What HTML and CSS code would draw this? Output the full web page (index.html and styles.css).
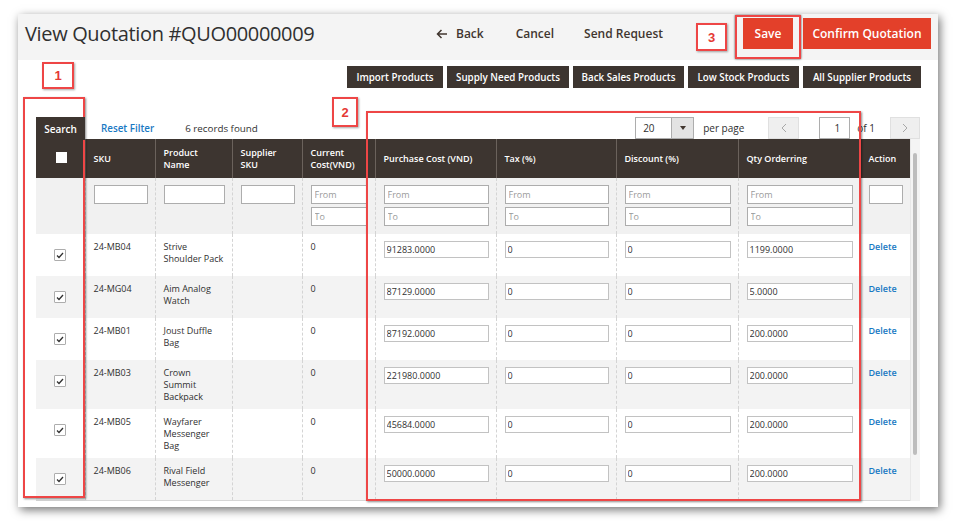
FILE: index.html
```html
<!DOCTYPE html>
<html lang="en">
<head>
<meta charset="utf-8">
<title>View Quotation #QUO00000009</title>
<link rel="stylesheet" href="styles.css">
</head>
<body>
<div class="stage">
  <div class="card">
    <header class="page-head">
      <h1 class="page-title">View Quotation #QUO00000009</h1>
      <nav class="actions">
        <a class="act act-back"><svg class="back-ico" width="12" height="10" viewBox="0 0 12 10"><path d="M11 5H1.5M5.5 1L1.5 5l4 4" fill="none" stroke="#41362f" stroke-width="1.5"/></svg>Back</a>
        <a class="act act-cancel">Cancel</a>
        <a class="act act-send">Send Request</a>
        <button class="btn-primary btn-save">Save</button>
        <button class="btn-primary btn-confirm">Confirm Quotation</button>
      </nav>
    </header>

    <div class="toolbar">
      <button class="tb-btn w95">Import Products</button>
      <button class="tb-btn w122">Supply Need Products</button>
      <button class="tb-btn w112">Back Sales Products</button>
      <button class="tb-btn w111">Low Stock Products</button>
      <button class="tb-btn w118">All Supplier Products</button>
    </div>

    <section class="grid">
      <div class="grid-top">
        <div class="search-tab">Search</div>
        <a class="reset-link">Reset Filter</a>
        <span class="count">6 records found</span>
        <div class="pager">
          <div class="select"><span class="select-val">20</span><span class="select-arrow"><svg width="6" height="4" viewBox="0 0 6 4"><path d="M0 0h6L3 4z" fill="#41362f"/></svg></span></div>
          <span class="per-page">per page</span>
          <span class="pg-btn pg-prev"><svg width="6" height="10" viewBox="0 0 6 10"><path d="M5 1L1 5l4 4" fill="none" stroke="#a8a8a8" stroke-width="1"/></svg></span>
          <span class="pg-input">1</span>
          <span class="of">of 1</span>
          <span class="pg-btn pg-next"><svg width="6" height="10" viewBox="0 0 6 10"><path d="M1 1l4 4-4 4" fill="none" stroke="#a8a8a8" stroke-width="1"/></svg></span>
        </div>
      </div>

      <div class="grid-body">
        <table class="data">
          <colgroup>
            <col class="c-check"><col class="c-sku"><col class="c-name"><col class="c-ssku"><col class="c-cost">
            <col class="c-pc"><col class="c-tax"><col class="c-disc"><col class="c-qty"><col class="c-act">
          </colgroup>
          <thead>
            <tr class="head">
              <th class="th-check"><span class="head-box"></span></th>
              <th>SKU</th>
              <th>Product Name</th>
              <th>Supplier SKU</th>
              <th>Current Cost(VND)</th>
              <th>Purchase Cost (VND)</th>
              <th>Tax (%)</th>
              <th>Discount (%)</th>
              <th>Qty Orderring</th>
              <th>Action</th>
            </tr>
            <tr class="filters">
              <td class="td-check"></td>
              <td><input class="f-in" type="text"></td>
              <td><input class="f-in" type="text"></td>
              <td><input class="f-in" type="text"></td>
              <td><input class="f-in" type="text" placeholder="From"><input class="f-in f-to" type="text" placeholder="To"></td>
              <td><input class="f-in" type="text" placeholder="From"><input class="f-in f-to" type="text" placeholder="To"></td>
              <td><input class="f-in" type="text" placeholder="From"><input class="f-in f-to" type="text" placeholder="To"></td>
              <td><input class="f-in" type="text" placeholder="From"><input class="f-in f-to" type="text" placeholder="To"></td>
              <td><input class="f-in" type="text" placeholder="From"><input class="f-in f-to" type="text" placeholder="To"></td>
              <td><input class="f-in" type="text"></td>
            </tr>
          </thead>
          <tbody>
            <tr class="row">
              <td class="td-check"><span class="cb"><svg width="8" height="7" viewBox="0 0 8 7"><path d="M1 3.5l2 2L7 1" fill="none" stroke="#303030" stroke-width="1.3"/></svg></span></td>
              <td>24-MB04</td><td>Strive<br>Shoulder Pack</td><td></td><td>0</td>
              <td><input class="r-in" type="text" value="91283.0000"></td>
              <td><input class="r-in" type="text" value="0"></td>
              <td><input class="r-in" type="text" value="0"></td>
              <td><input class="r-in" type="text" value="1199.0000"></td>
              <td><a class="del">Delete</a></td>
            </tr>
            <tr class="row alt">
              <td class="td-check"><span class="cb"><svg width="8" height="7" viewBox="0 0 8 7"><path d="M1 3.5l2 2L7 1" fill="none" stroke="#303030" stroke-width="1.3"/></svg></span></td>
              <td>24-MG04</td><td>Aim Analog<br>Watch</td><td></td><td>0</td>
              <td><input class="r-in" type="text" value="87129.0000"></td>
              <td><input class="r-in" type="text" value="0"></td>
              <td><input class="r-in" type="text" value="0"></td>
              <td><input class="r-in" type="text" value="5.0000"></td>
              <td><a class="del">Delete</a></td>
            </tr>
            <tr class="row">
              <td class="td-check"><span class="cb"><svg width="8" height="7" viewBox="0 0 8 7"><path d="M1 3.5l2 2L7 1" fill="none" stroke="#303030" stroke-width="1.3"/></svg></span></td>
              <td>24-MB01</td><td>Joust Duffle<br>Bag</td><td></td><td>0</td>
              <td><input class="r-in" type="text" value="87192.0000"></td>
              <td><input class="r-in" type="text" value="0"></td>
              <td><input class="r-in" type="text" value="0"></td>
              <td><input class="r-in" type="text" value="200.0000"></td>
              <td><a class="del">Delete</a></td>
            </tr>
            <tr class="row alt">
              <td class="td-check"><span class="cb"><svg width="8" height="7" viewBox="0 0 8 7"><path d="M1 3.5l2 2L7 1" fill="none" stroke="#303030" stroke-width="1.3"/></svg></span></td>
              <td>24-MB03</td><td>Crown<br>Summit<br>Backpack</td><td></td><td>0</td>
              <td><input class="r-in" type="text" value="221980.0000"></td>
              <td><input class="r-in" type="text" value="0"></td>
              <td><input class="r-in" type="text" value="0"></td>
              <td><input class="r-in" type="text" value="200.0000"></td>
              <td><a class="del">Delete</a></td>
            </tr>
            <tr class="row">
              <td class="td-check"><span class="cb"><svg width="8" height="7" viewBox="0 0 8 7"><path d="M1 3.5l2 2L7 1" fill="none" stroke="#303030" stroke-width="1.3"/></svg></span></td>
              <td>24-MB05</td><td>Wayfarer<br>Messenger<br>Bag</td><td></td><td>0</td>
              <td><input class="r-in" type="text" value="45684.0000"></td>
              <td><input class="r-in" type="text" value="0"></td>
              <td><input class="r-in" type="text" value="0"></td>
              <td><input class="r-in" type="text" value="200.0000"></td>
              <td><a class="del">Delete</a></td>
            </tr>
            <tr class="row alt">
              <td class="td-check"><span class="cb"><svg width="8" height="7" viewBox="0 0 8 7"><path d="M1 3.5l2 2L7 1" fill="none" stroke="#303030" stroke-width="1.3"/></svg></span></td>
              <td>24-MB06</td><td>Rival Field<br>Messenger</td><td></td><td>0</td>
              <td><input class="r-in" type="text" value="50000.0000"></td>
              <td><input class="r-in" type="text" value="0"></td>
              <td><input class="r-in" type="text" value="0"></td>
              <td><input class="r-in" type="text" value="200.0000"></td>
              <td><a class="del">Delete</a></td>
            </tr>
          </tbody>
        </table>
        <div class="gutter"><div class="thumb"></div></div>
      </div>
    </section>

    <!-- annotation overlay -->
    <div class="ann-outline ann-o1"></div>
    <div class="ann-outline ann-o2"></div>
    <div class="ann-outline ann-save"></div>
    <div class="ann-tag ann-t1">1</div>
    <div class="ann-tag ann-t2">2</div>
    <div class="ann-tag ann-t3">3</div>
  </div>
</div>
</body>
</html>
```

FILE: styles.css
```css
* { box-sizing: border-box; }
html, body { margin: 0; padding: 0; background: #ffffff; }
body { font-family: "Open Sans", "Liberation Sans", sans-serif; color: #303030; }

.stage { padding: 14px 18px; }

.card {
  position: relative;
  width: 920px;
  height: 493px;
  background: #ffffff;
  overflow: hidden;
  box-shadow: 2px 3px 9px rgba(0, 0, 0, 0.55);
}

/* ---------- page header ---------- */
.page-head {
  display: flex;
  align-items: center;
  height: 46px;
  padding: 0 7px 7px 7px;
  background: #f4f4f4;
}
.page-title {
  margin: 0;
  font-size: 20px;
  font-weight: 400;
  color: #303030;
  letter-spacing: -0.35px;
}
.actions {
  margin-left: auto;
  display: flex;
  align-items: center;
}
.act {
  display: flex;
  align-items: center;
  font-size: 12px;
  font-weight: 600;
  color: #41362f;
}
.back-ico { margin-right: 8px; }
.act-cancel { margin-left: 32px; }
.act-send { margin-left: 30px; }
.btn-primary {
  height: 31px;
  border: 0;
  background: #e3402a;
  color: #ffffff;
  font-family: "Open Sans", "Liberation Sans", sans-serif;
  font-size: 12px;
  font-weight: 600;
  padding: 0;
}
.btn-save { width: 50px; margin-left: 80px; }
.btn-confirm { width: 128px; margin-left: 10px; }

/* ---------- toolbar ---------- */
.toolbar {
  display: flex;
  justify-content: flex-end;
  gap: 4px;
  padding: 6px 17px 0 0;
}
.tb-btn {
  height: 22px;
  padding: 0;
  border: 0;
  background: #3d3530;
  color: #ffffff;
  font-family: "Open Sans", "Liberation Sans", sans-serif;
  font-size: 9.8px;
  font-weight: 600;
}
.w95 { width: 96px; }
.w122 { width: 122px; }
.w112 { width: 111px; }
.w111 { width: 111px; }
.w118 { width: 118px; }

/* ---------- grid ---------- */
.grid { padding: 29px 18px 0 18px; }

.grid-top {
  display: flex;
  align-items: flex-end;
  height: 22px;
  font-size: 10px;
}
.search-tab {
  width: 49px;
  height: 23px;
  margin-bottom: -1px;
  background: #3d3530;
  color: #ffffff;
  font-weight: 600;
  font-size: 10px;
  display: flex;
  align-items: center;
  justify-content: center;
  position: relative;
  z-index: 1;
}
.reset-link {
  align-self: center;
  margin-left: 16px;
  color: #1979c3;
  font-weight: 600;
  font-size: 9.8px;
}
.count {
  align-self: center;
  margin-left: 31px;
  font-size: 9.8px;
  color: #303030;
}
.pager {
  margin-left: auto;
  display: flex;
  align-items: center;
  height: 22px;
  font-size: 10px;
}
.select {
  display: flex;
  width: 59px;
  height: 22px;
  border: 1px solid #adadad;
  background: #fff;
}
.select-val { flex: 1; padding: 3px 0 0 7px; }
.select-arrow {
  width: 22px;
  background: #e3e3e3;
  border-left: 1px solid #adadad;
  display: flex;
  align-items: center;
  justify-content: center;
}
.per-page { margin-left: 9px; }
.pg-btn {
  width: 31px;
  height: 22px;
  background: #efefef;
  border: 1px solid #e0e0e0;
  display: flex;
  align-items: center;
  justify-content: center;
}
.pg-prev { margin-left: 24px; }
.pg-input {
  margin-left: 20px;
  width: 31px;
  height: 22px;
  border: 1px solid #adadad;
  background: #fff;
  text-align: right;
  padding: 3px 9px 0 0;
}
.of { margin-left: 7px; }
.pg-next { margin-left: 15px; width: 30px; }

.grid-body { display: flex; }

.data {
  width: 874px;
  border-collapse: collapse;
  table-layout: fixed;
  font-size: 9px;
  line-height: 12px;
  color: #303030;
  border-bottom: 1px solid #d6d6d6;
}
.c-check { width: 49px; }
.c-sku { width: 70px; }
.c-name { width: 77px; }
.c-ssku { width: 70px; }
.c-cost { width: 73px; }
.c-pc { width: 121px; }
.c-tax { width: 120px; }
.c-disc { width: 122px; }
.c-qty { width: 122px; }
.c-act { width: 50px; }

.head th {
  height: 39px;
  background: #3d3530;
  color: #ffffff;
  font-weight: 600;
  text-align: left;
  vertical-align: middle;
  padding: 0 6px 0 8px;
  border-left: 1px solid #6b625c;
}
.head th.th-check { border-left: 0; text-align: center; }
.head-box {
  display: inline-block;
  width: 11px;
  height: 11px;
  background: #ffffff;
  vertical-align: middle;
  margin-top: -3px;
}

.filters td {
  height: 56px;
  background: #f1f1f1;
  padding: 7px 7px 8px 8px;
  vertical-align: top;
  border-left: 1px dashed #d4d4d4;
}
.filters td.td-check { border-left: 0; }
.f-in {
  display: block;
  width: 100%;
  height: 19px;
  margin: 0;
  border: 1px solid #adadad;
  background: #ffffff;
  font-family: "Open Sans", "Liberation Sans", sans-serif;
  font-size: 9px;
  padding: 0 3px;
  color: #303030;
}
.f-in::placeholder { color: #9a9a9a; }
.f-to { margin-top: 3px; }

.row { height: 42px; }
.row td {
  background: #ffffff;
  padding: 7px 5px 6px 8px;
  vertical-align: top;
  border-left: 1px dashed #d4d4d4;
}
.row.alt td { background: #f3f3f3; }
.row td.td-check {
  border-left: 0;
  text-align: center;
  padding: 15px 0 0 0;
}
.cb {
  display: inline-flex;
  align-items: center;
  justify-content: center;
  width: 12px;
  height: 12px;
  border: 1px solid #adadad;
  border-radius: 1px;
  background: #ffffff;
  vertical-align: top;
}
.row td:nth-child(n+6) { padding-right: 7px; }
.r-in {
  display: block;
  width: 100%;
  height: 17px;
  margin: 0;
  border: 1px solid #c2c2c2;
  background: #ffffff;
  font-family: "Open Sans", "Liberation Sans", sans-serif;
  font-size: 9px;
  padding: 0 2px;
  color: #303030;
}
.del { color: #1979c3; font-weight: 600; }

.gutter {
  width: 10px;
  background: #f4f4f4;
  border-left: 1px solid #e8e8e8;
  padding-top: 14px;
}
.thumb {
  width: 4px;
  height: 302px;
  margin-left: 2px;
  border-radius: 2px;
  background: #bdbdbd;
}

/* ---------- annotation overlay ---------- */
.ann-outline {
  position: absolute;
  border: 2px solid #ee4646;
  box-shadow: 1px 1px 2px rgba(0, 0, 0, 0.45);
  pointer-events: none;
}
.ann-o1 { left: 5px; top: 83px; width: 62px; height: 401px; }
.ann-o2 { left: 348px; top: 97px; width: 495px; height: 390px; }
.ann-save { left: 717px; top: 1px; width: 66px; height: 44px; box-shadow: 0 0 2px rgba(0, 0, 0, 0.7); }
.ann-tag {
  position: absolute;
  background: #ffffff;
  border: 2px solid #ee4646;
  box-shadow: 1px 1px 2px rgba(0, 0, 0, 0.35);
  color: #e53935;
  font-family: "Liberation Sans", Arial, sans-serif;
  font-weight: 700;
  font-size: 13px;
  display: flex;
  align-items: center;
  justify-content: center;
}
.ann-t1 { left: 24px; top: 48px; width: 32px; height: 27px; }
.ann-t2 { left: 314px; top: 83px; width: 26px; height: 30px; }
.ann-t3 { left: 678px; top: 9px; width: 31px; height: 28px; }
```
